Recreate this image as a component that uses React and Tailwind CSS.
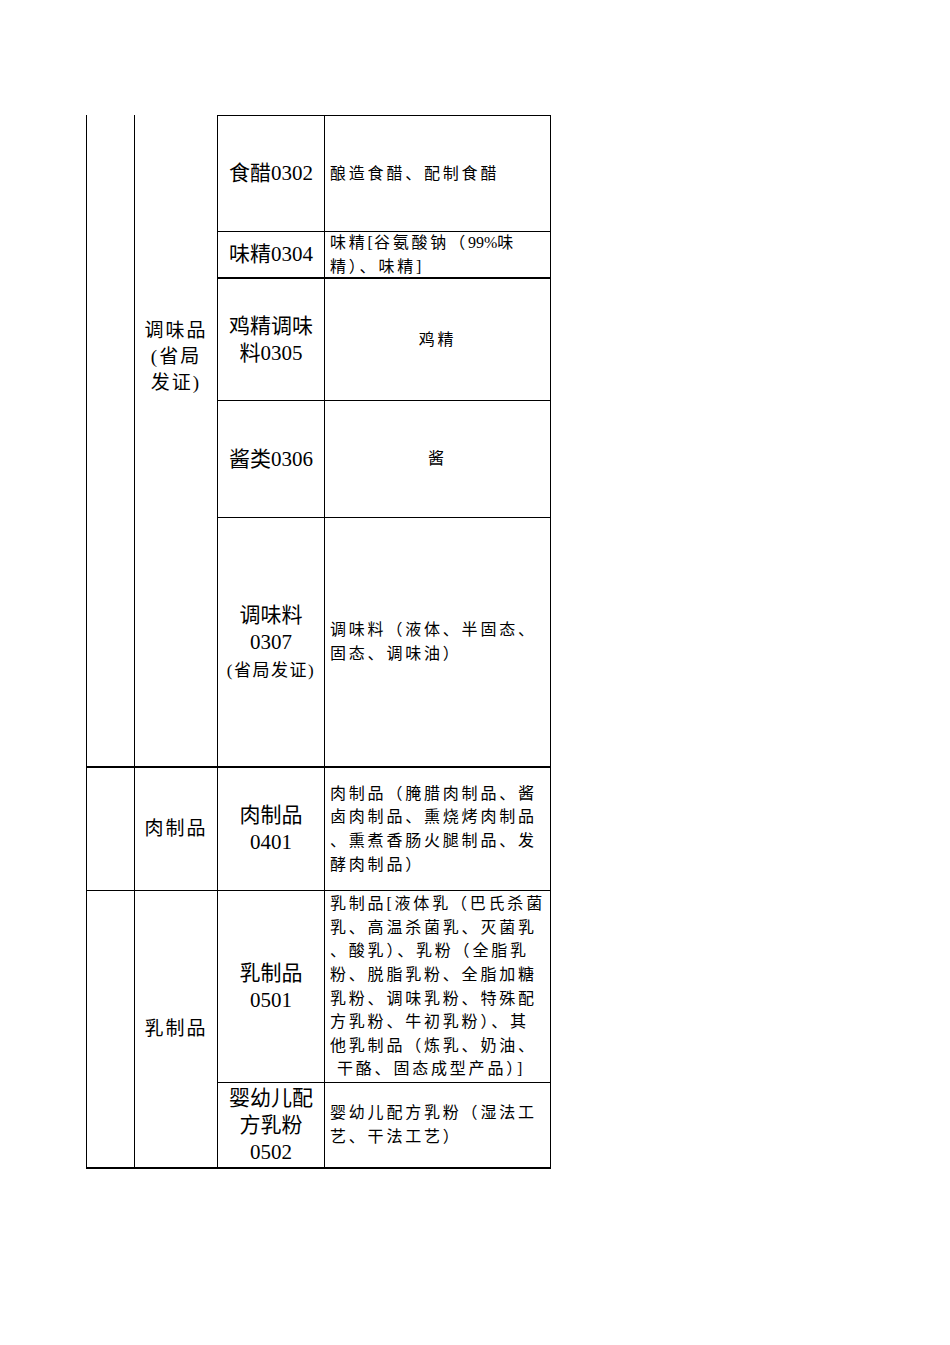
import React from "react";

const serif = "font-['Liberation_Serif','Noto_Sans_CJK_SC',serif] text-black";

// col4 description lines, wrapped by hand like the sheet
const Desc = ({ lines, center }) => (
  <div
    className={`flex h-full flex-col justify-center text-[16px] leading-[23.6px] tracking-[2.8px] whitespace-nowrap ${
      center ? "items-center" : "items-start pl-[5px]"
    }`}
  >
    {lines.map((l, i) => (
      <div key={i} className={l.indent ? "pl-[7px]" : ""}>
        {l.text ?? l}
      </div>
    ))}
  </div>
);

const Code = ({ lines, small }) => (
  <div className="flex h-full flex-col items-center justify-center text-[21px] leading-[27px] whitespace-nowrap">
    {lines.map((l, i) => (
      <div key={i}>{l}</div>
    ))}
    {small && (
      <div className="mt-[3px] text-[17px] leading-[24px] tracking-[1.5px]">{small}</div>
    )}
  </div>
);

const App = () => {
  return (
    <div className={`min-h-[1345px] w-[950px] bg-white ${serif}`}>
      <div className="ml-[86px] pt-[115px]">
        <div className="grid grid-cols-[49px_83px_107px_226px] grid-rows-[117px_47px_122px_117px_250px_123px_192px_86px]">
          {/* 调味品 block */}
          <div className="row-span-5 col-start-1 row-start-1 border-l border-r border-b-2 border-black"></div>
          <div className="row-span-5 col-start-2 row-start-1 border-r border-b-2 border-black">
            <div className="flex flex-col items-center pt-[203px] text-[19px] leading-[26px] tracking-[2px]">
              <div>调味品</div>
              <div>(省局</div>
              <div>发证)</div>
            </div>
          </div>

          <div className="col-start-3 row-start-1 border-t border-r border-b border-black">
            <Code lines={["食醋0302"]} />
          </div>
          <div className="col-start-4 row-start-1 border-t border-r border-b border-black">
            <Desc lines={["酿造食醋、配制食醋"]} />
          </div>

          <div className="col-start-3 row-start-2 border-r border-b-2 border-black">
            <Code lines={["味精0304"]} />
          </div>
          <div className="col-start-4 row-start-2 border-r border-b-2 border-black">
            <Desc
              lines={[
                <>
                  味精<span className="tracking-[1px]">[</span>谷氨酸钠（
                  <span className="tracking-normal">99%</span>味
                </>,
                <>
                  精）、味精<span className="tracking-normal">]</span>
                </>,
              ]}
            />
          </div>

          <div className="col-start-3 row-start-3 border-r border-b border-black">
            <Code lines={["鸡精调味", "料0305"]} />
          </div>
          <div className="col-start-4 row-start-3 border-r border-b border-black">
            <Desc lines={["鸡精"]} center />
          </div>

          <div className="col-start-3 row-start-4 border-r border-b border-black">
            <Code lines={["酱类0306"]} />
          </div>
          <div className="col-start-4 row-start-4 border-r border-b border-black">
            <Desc lines={["酱"]} center />
          </div>

          <div className="col-start-3 row-start-5 border-r border-b-2 border-black">
            <Code lines={["调味料", "0307"]} small="(省局发证)" />
          </div>
          <div className="col-start-4 row-start-5 border-r border-b-2 border-black">
            <Desc lines={["调味料（液体、半固态、", "固态、调味油）"]} />
          </div>

          {/* 肉制品 */}
          <div className="col-start-1 row-start-6 border-l border-r border-b border-black"></div>
          <div className="col-start-2 row-start-6 border-r border-b border-black">
            <div className="flex h-full items-center justify-center text-[19px] tracking-[2px]">肉制品</div>
          </div>
          <div className="col-start-3 row-start-6 border-r border-b border-black">
            <Code lines={["肉制品", "0401"]} />
          </div>
          <div className="col-start-4 row-start-6 border-r border-b border-black">
            <Desc
              lines={[
                "肉制品（腌腊肉制品、酱",
                "卤肉制品、熏烧烤肉制品",
                "、熏煮香肠火腿制品、发",
                "酵肉制品）",
              ]}
            />
          </div>

          {/* 乳制品 */}
          <div className="row-span-2 col-start-1 row-start-7 border-l border-r border-b-2 border-black"></div>
          <div className="row-span-2 col-start-2 row-start-7 border-r border-b-2 border-black">
            <div className="flex h-full items-center justify-center text-[19px] tracking-[2px]">乳制品</div>
          </div>
          <div className="col-start-3 row-start-7 border-r border-b border-black">
            <Code lines={["乳制品", "0501"]} />
          </div>
          <div className="col-start-4 row-start-7 border-r border-b border-black">
            <Desc
              lines={[
                "乳制品[液体乳（巴氏杀菌",
                "乳、高温杀菌乳、灭菌乳",
                "、酸乳）、乳粉（全脂乳",
                "粉、脱脂乳粉、全脂加糖",
                "乳粉、调味乳粉、特殊配",
                "方乳粉、牛初乳粉）、其",
                "他乳制品（炼乳、奶油、",
                { text: "干酪、固态成型产品）]", indent: true },
              ]}
            />
          </div>

          <div className="col-start-3 row-start-8 border-r border-b-2 border-black">
            <Code lines={["婴幼儿配", "方乳粉", "0502"]} />
          </div>
          <div className="col-start-4 row-start-8 border-r border-b-2 border-black">
            <Desc lines={["婴幼儿配方乳粉（湿法工", "艺、干法工艺）"]} />
          </div>
        </div>
      </div>
    </div>
  );
};

export default App;
